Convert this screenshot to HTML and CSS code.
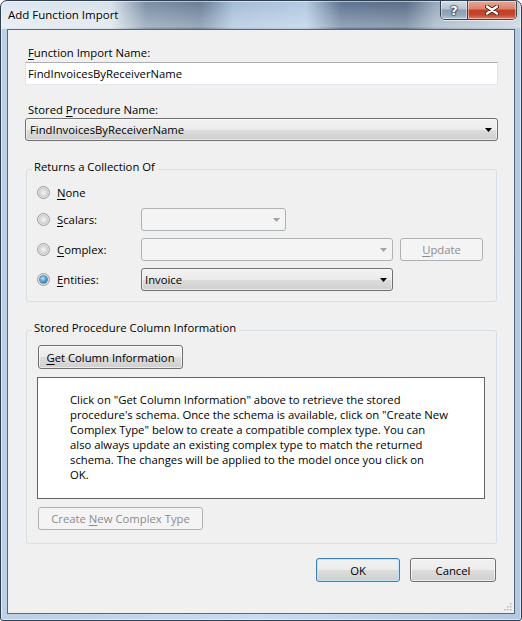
FILE: index.html
```html
<!DOCTYPE html>
<html>
<head>
<meta charset="utf-8">
<title>Add Function Import</title>
<link rel="stylesheet" href="styles.css">
</head>
<body>
<div class="window">
  <div class="titlebar">
    <span class="title">Add Function Import</span>
    <div class="caption-buttons">
      <div class="cap-btn help">?</div>
      <div class="cap-btn close">
        <svg width="14" height="10" viewBox="0 0 14 10"><path d="M2 1.5 L12 8.5 M12 1.5 L2 8.5" stroke="#4a2018" stroke-width="4.2" stroke-linecap="round"/><path d="M2 1.5 L12 8.5 M12 1.5 L2 8.5" stroke="#ffffff" stroke-width="2.4" stroke-linecap="round"/></svg>
      </div>
    </div>
  </div>
  <div class="client">
    <div class="form">
      <div class="label"><u>F</u>unction Import Name:</div>
      <div class="textbox">FindInvoicesByReceiverName</div>
      <div class="label label-sp">Stored <u>P</u>rocedure Name:</div>
      <div class="combo combo-full"><span>FindInvoicesByReceiverName</span><svg class="arrow" width="7" height="4" viewBox="0 0 7 4"><polygon points="0,0 7,0 3.5,4" fill="#000"/></svg></div>

      <fieldset class="group group-returns">
        <legend>Returns a Collection Of</legend>
        <div class="rows">
          <div class="row row-none">
            <div class="opt"><span class="radio"></span><span><u>N</u>one</span></div>
          </div>
          <div class="row row-scalars">
            <div class="opt"><span class="radio"></span><span><u>S</u>calars:</span></div>
            <div class="combo combo-small disabled"><span></span><svg class="arrow" width="7" height="4" viewBox="0 0 7 4"><polygon points="0,0 7,0 3.5,4" fill="#a3a3a3"/></svg></div>
          </div>
          <div class="row row-gap">
            <div class="opt"><span class="radio"></span><span><u>C</u>omplex:</span></div>
            <div class="combo combo-wide disabled"><span></span><svg class="arrow" width="7" height="4" viewBox="0 0 7 4"><polygon points="0,0 7,0 3.5,4" fill="#a3a3a3"/></svg></div>
            <button class="btn btn-update disabled"><span><u>U</u>pdate</span></button>
          </div>
          <div class="row row-gap">
            <div class="opt"><span class="radio checked"></span><span><u>E</u>ntities:</span></div>
            <div class="combo combo-wide"><span>Invoice</span><svg class="arrow" width="7" height="4" viewBox="0 0 7 4"><polygon points="0,0 7,0 3.5,4" fill="#000"/></svg></div>
          </div>
        </div>
      </fieldset>

      <fieldset class="group group-columns">
        <legend>Stored Procedure Column Information</legend>
        <div class="cols">
          <button class="btn btn-get"><span><u>G</u>et Column Information</span></button>
          <div class="desc">Click on "Get Column Information" above to retrieve the stored<br>procedure's schema. Once the schema is available, click on "Create New<br>Complex Type" below to create a compatible complex type. You can<br>also always update an existing complex type to match the returned<br>schema. The changes will be applied to the model once you click on<br>OK.</div>
          <button class="btn btn-create disabled"><span>Create <u>N</u>ew Complex Type</span></button>
        </div>
      </fieldset>

      <div class="actions">
        <button class="btn btn-ok"><span>OK</span></button>
        <button class="btn btn-cancel"><span>Cancel</span></button>
      </div>
    </div>
    <svg class="grip" width="8" height="8" viewBox="0 0 8 8">
      <rect x="6" y="0" width="1.5" height="1.5" fill="#b5b5b5"/>
      <rect x="3" y="3" width="1.5" height="1.5" fill="#b5b5b5"/>
      <rect x="6" y="3" width="1.5" height="1.5" fill="#b5b5b5"/>
      <rect x="0" y="6" width="1.5" height="1.5" fill="#b5b5b5"/>
      <rect x="3" y="6" width="1.5" height="1.5" fill="#b5b5b5"/>
      <rect x="6" y="6" width="1.5" height="1.5" fill="#b5b5b5"/>
    </svg>
  </div>
</div>
</body>
</html>
```

FILE: styles.css
```css
* { box-sizing: border-box; }
html, body { margin: 0; padding: 0; }
body {
  font-family: "Open Sans", "Noto Sans", sans-serif;
  font-size: 11.3px;
  line-height: 15px;
  color: #000;
  background: #ffffff;
}
u { text-decoration: underline; text-underline-offset: 2px; }

.window {
  width: 522px;
  height: 621px;
  border: 1px solid #2f3e50;
  border-radius: 7px 7px 3px 3px;
  display: flex;
  flex-direction: column;
  overflow: hidden;
  background:
    linear-gradient(to bottom, rgba(255,255,255,0) 0px, rgba(255,255,255,0.35) 26px, rgba(255,255,255,0) 28px) 0 0 / 100% 28px no-repeat,
    linear-gradient(to right, #dde6ef 0px, #d6e0ea 110px, #7a8ea5 145px, #677d96 200px, #a3bcd7 232px, #b1c8e0 305px, #5d7390 340px, #566c86 405px, #96a8bb 435px, #c2cedb 522px) 0 0 / 100% 28px no-repeat,
    linear-gradient(to right, #bcd0e6, #c9dbee 50%, #b4c9e1);
  box-shadow: inset 0 0 0 1px rgba(255,255,255,0.55);
}

.titlebar {
  height: 28px;
  flex: none;
  display: flex;
  align-items: flex-start;
  padding-left: 7px;
}
.title {
  margin-top: 6px;
  font-size: 11.5px;
  color: #000;
  text-shadow: 0 0 6px rgba(255,255,255,0.95), 0 0 10px rgba(255,255,255,0.8);
}
.caption-buttons {
  margin-left: auto;
  margin-right: 4px;
  display: flex;
  height: 19px;
  border: 1px solid rgba(35,45,60,0.85);
  border-top: none;
  border-radius: 0 0 5px 5px;
  overflow: hidden;
  box-shadow: 0 1px 0 rgba(255,255,255,0.6);
}
.cap-btn {
  height: 18px;
  display: flex;
  align-items: center;
  justify-content: center;
  box-shadow: inset 0 0 0 1px rgba(255,255,255,0.45);
}
.help {
  width: 27px;
  border-right: 1px solid rgba(35,45,60,0.85);
  background: linear-gradient(#d3dce6 0%, #b4c2d1 45%, #8d9db1 50%, #9aaabd 80%, #b8c7d8 100%);
  color: #fff;
  font-family: "DejaVu Sans", sans-serif;
  font-weight: bold;
  font-size: 13px;
  text-shadow: 0 0 1px #1d2733, 0 0 2px #1d2733, 0 0 2px #1d2733;
}
.close {
  width: 48px;
  background: linear-gradient(#e9a796 0%, #d9826b 45%, #c43e23 50%, #c4482d 78%, #e2836a 100%);
}

.client {
  flex: 1;
  margin: 0 6px 6px;
  border: 1px solid #56687c;
  background: #f0f0f0;
  position: relative;
}
.form {
  padding: 15px 16px 0 17px;
}
.label { padding-left: 3px; height: 15px; }
.label-sp { margin-top: 17px; }

.textbox {
  margin-top: 2px;
  height: 23px;
  background: #fff;
  border: 1px solid #e2e3ea;
  border-top-color: #abadb3;
  border-bottom-color: #e3e9ef;
  padding-left: 2px;
  display: flex;
  align-items: center;
}

.combo {
  height: 23px;
  border: 1px solid #707070;
  border-radius: 3px;
  background: linear-gradient(#f2f2f2 0%, #ebebeb 50%, #dddddd 51%, #cfcfcf 100%);
  box-shadow: inset 0 0 0 1px rgba(255,255,255,0.55);
  display: flex;
  align-items: center;
  justify-content: space-between;
  padding: 0 5px 0 3px;
}
.combo.disabled {
  border-color: #adb2b5;
  background: #f4f4f4;
  box-shadow: none;
}
.combo-full { margin-top: 1px; padding-left: 4px; }
.combo-small { width: 145px; }
.combo-wide { width: 252px; }
.arrow { flex: none; }

.group {
  margin: 18px 1px 0 1px;
  padding: 0 0 0 5px;
  border: 1px solid #d5dfe5;
  border-radius: 3px;
  min-inline-size: 0;
}
.group legend {
  padding: 0 3px 5px 2px;
  line-height: 15px;
}
.rows { padding: 2px 0 10px 5px; }
.row {
  display: flex;
  align-items: center;
  height: 23px;
}
.row-scalars { margin-top: 4px; }
.row-gap { margin-top: 7px; }
.opt {
  width: 104px;
  display: flex;
  align-items: center;
}
.radio {
  width: 13px;
  height: 13px;
  margin-right: 7px;
  border-radius: 50%;
  border: 1px solid #9a9a9a;
  background: radial-gradient(circle at 50% 50%, #f4f4f4 0, #e2e2e2 2.5px, #cdcdcd 4.5px, #f6f6f6 5.5px);
  position: relative;
  flex: none;
}
.radio.checked::after {
  content: "";
  position: absolute;
  left: 2px;
  top: 2px;
  width: 7px;
  height: 7px;
  border-radius: 50%;
  background: radial-gradient(circle at 40% 35%, #b8e8ff 0, #4ea9e4 45%, #1b5993 100%);
  box-shadow: 0 0 0 0.5px #1d4466;
}

.btn {
  font: inherit;
  color: #000;
  padding: 0;
  margin: 0;
  height: 24px;
  border: 1px solid #707070;
  border-radius: 3px;
  background: linear-gradient(#f2f2f2 0%, #ebebeb 50%, #dddddd 51%, #cfcfcf 100%);
  box-shadow: inset 0 0 0 1px rgba(255,255,255,0.6);
  display: flex;
  align-items: center;
  justify-content: center;
}
.btn.disabled {
  border-color: #adb2b5;
  background: #f4f4f4;
  box-shadow: none;
  color: #8d8d8d;
}
.btn-update { width: 83px; height: 23px; margin-left: 7px; }

.cols { padding: 5px 0 13px 5px; }
.btn-get { width: 145px; margin-left: 1px; }
.desc {
  margin-top: 8px;
  width: 448px;
  height: 122px;
  border: 1px solid #646464;
  background: #fff;
  padding: 14px 0 0 32px;
  white-space: nowrap;
}
.btn-create { width: 165px; height: 23px; margin-top: 8px; margin-left: 1px; color: #a3a3a3; }

.actions {
  margin-top: 14px;
  padding-right: 2px;
  display: flex;
  justify-content: flex-end;
  gap: 10px;
}
.btn-ok {
  width: 84px;
  border-color: #3c7fb1;
  box-shadow: inset 0 0 0 1px #bfe6fb;
}
.btn-cancel { width: 86px; }

.grip {
  position: absolute;
  right: 2px;
  bottom: 2px;
}
```
